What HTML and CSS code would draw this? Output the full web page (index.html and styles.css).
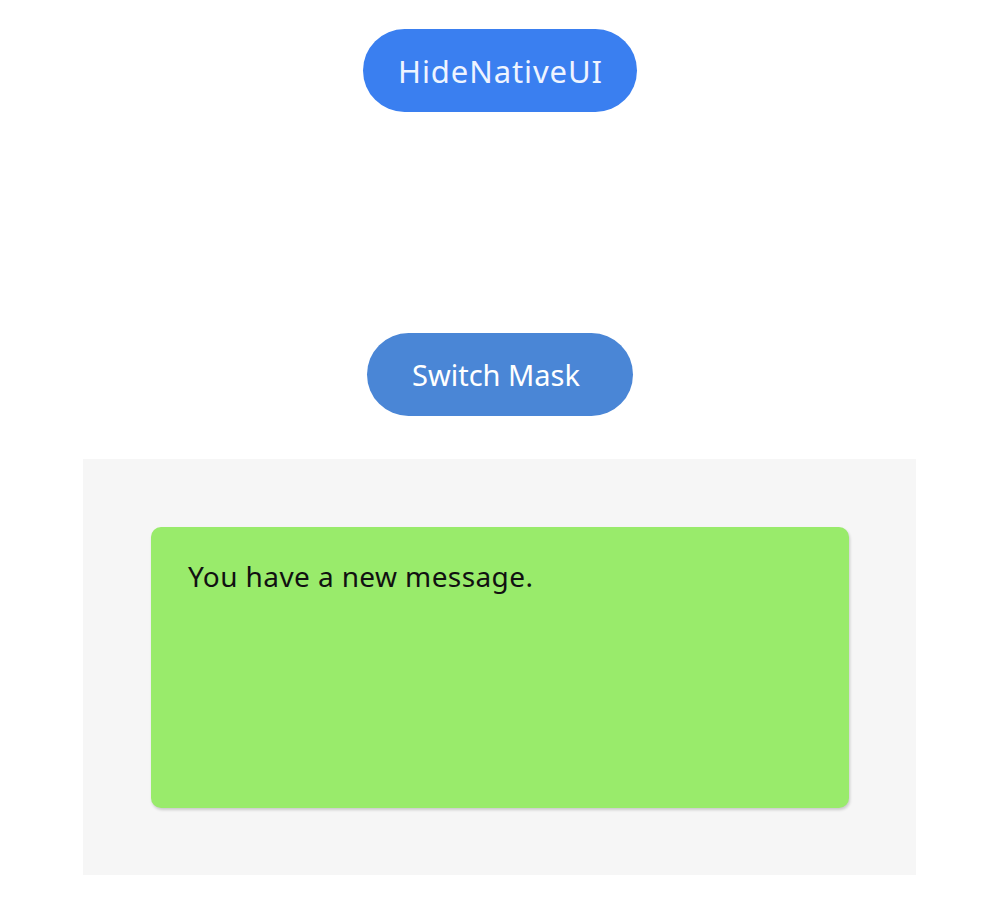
FILE: index.html
```html
<!DOCTYPE html>
<html>
<head>
<meta charset="utf-8">
<link rel="stylesheet" href="styles.css">
</head>
<body>
<div class="page">
  <button class="btn btn-primary">HideNativeUI</button>
  <div class="spacer"></div>
  <button class="btn btn-secondary">Switch Mask</button>
  <div class="panel">
    <div class="card">You have a new message.</div>
  </div>
</div>
</body>
</html>
```
FILE: styles.css
```css
html, body {
  margin: 0;
  padding: 0;
  background: #ffffff;
}
.page {
  display: flex;
  flex-direction: column;
  align-items: center;
  padding-top: 29px;
  font-family: "Noto Sans", "Open Sans", sans-serif;
}
.btn {
  border: none;
  border-radius: 42px;
  height: 83px;
  color: #ffffff;
  font-family: inherit;
  font-size: 29px;
  padding: 0;
  cursor: pointer;
}
.btn-primary {
  width: 274px;
  background: #3a7ff0;
  color: #eef4ff;
  font-size: 31px;
  letter-spacing: 0.9px;
  padding-left: 1px;
}
.btn-secondary {
  width: 266px;
  background: #4a86d6;
  padding-right: 8px;
}
.spacer {
  height: 221px;
}
.panel {
  margin-top: 43px;
  margin-left: -1px;
  width: 833px;
  box-sizing: border-box;
  padding: 68px 67px 67px 68px;
  background: #f6f6f6;
}
.card {
  height: 281px;
  box-sizing: border-box;
  background: #99eb6b;
  border-radius: 10px;
  box-shadow: 1px 2px 3px rgba(0, 0, 0, 0.18);
  padding: 30px 37px;
  font-size: 28px;
  letter-spacing: 0.4px;
  color: #111111;
}
```
